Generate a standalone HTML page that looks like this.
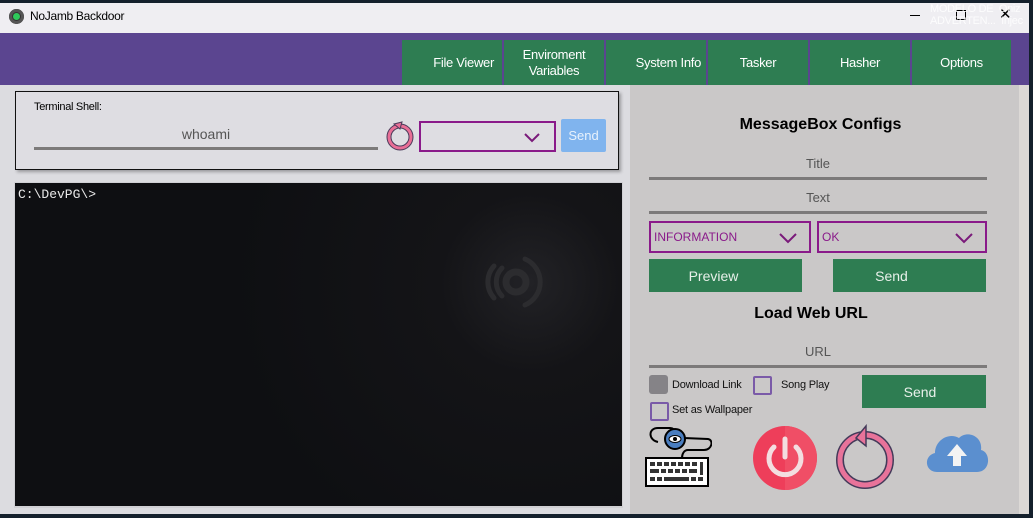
<!DOCTYPE html>
<html><head><meta charset="utf-8"><style>
*{margin:0;padding:0;box-sizing:border-box}
body{width:1033px;height:518px;background:#14202c;position:relative;overflow:hidden;font-family:"Liberation Sans",sans-serif}
.a{position:absolute}
.tab{position:absolute;top:40px;height:45px;width:100px;background:#2e7d52;color:#fff;font-size:13px;letter-spacing:-0.3px;display:flex;align-items:center;justify-content:center;text-align:center;line-height:16px}
.uline{position:absolute;height:3px;background:#7c7a7a}
.lbl{position:absolute;color:#555;font-size:13px;text-align:center}
.sel{position:absolute;border:2px solid #8a1a8a;color:#8a1a8a;font-size:12px;padding:7px 0 0 3px}
.gbtn{position:absolute;background:#2e7d52;color:#e8f0ea;font-size:14px;display:flex;align-items:center;justify-content:center}
.cb{position:absolute;width:19px;height:19px;border:2px solid #7a5aa8;border-radius:2px}
.cbl{position:absolute;font-size:11px;color:#111;letter-spacing:-0.2px}
</style></head><body>
<div class="a" style="left:0;top:3px;width:1029px;height:511px;background:#dcdce0"></div>
<div class="a" style="left:0;top:3px;width:1029px;height:30px;background:#efeef2"></div>
<div class="a" style="left:9px;top:9px;width:15px;height:15px;border-radius:50%;background:#333;box-shadow:inset 0 0 0 3px #555"></div>
<div class="a" style="left:13px;top:13px;width:7px;height:7px;border-radius:50%;background:#2ec95a"></div>
<div class="a" style="left:30px;top:9px;font-size:12px;color:#000;letter-spacing:-0.3px">NoJamb Backdoor</div>
<div class="a" style="left:910px;top:15px;width:10px;height:1px;background:#000"></div>
<div class="a" style="left:956px;top:10px;width:10px;height:10px;border:1px solid #000"></div>
<div class="a" style="left:999px;top:5px;font-size:15px;color:#000">✕</div>
<div class="a" style="left:930px;top:3px;font-size:11px;color:#fff;line-height:12px;opacity:.85;letter-spacing:-0.3px">MODELO DE &nbsp;Oniz<br>ADVERTEN... &nbsp;Injec</div>
<div class="a" style="left:0;top:33px;width:1029px;height:52px;background:#5b4590"></div>
<div class="tab" style="left:402px;justify-content:flex-end;padding-right:8px">File Viewer</div>
<div class="tab" style="left:504px">Enviroment<br>Variables</div>
<div class="tab" style="left:606px;justify-content:flex-end;padding-right:5px">System Info</div>
<div class="tab" style="left:708px">Tasker</div>
<div class="tab" style="left:810px">Hasher</div>
<div class="tab" style="left:912px;width:99px">Options</div>
<!-- left -->
<div class="a" style="left:0;top:85px;width:630px;height:429px;background:#dcdce0"></div>
<div class="a" style="left:15px;top:91px;width:604px;height:79px;background:#dedde2;border:1px solid #111;box-shadow:2px 2px 3px rgba(0,0,0,.3)"></div>
<div class="a" style="left:34px;top:101px;font-size:11px;color:#000;letter-spacing:-0.3px">Terminal Shell:</div>
<div class="a" style="left:34px;top:126px;width:344px;text-align:center;font-size:14px;color:#555">whoami</div>
<div class="uline" style="left:34px;top:147px;width:344px"></div>
<svg class="a" style="left:385px;top:120px" width="30" height="32" viewBox="0 0 30 32"><circle cx="15" cy="17" r="11" fill="none" stroke="#4a3a5a" stroke-width="5"/><circle cx="15" cy="17" r="11" fill="none" stroke="#e86e96" stroke-width="3"/><path d="M9 4 L17 2 L15 9 Z" fill="#e86e96" stroke="#4a3a5a"/></svg>
<div class="sel" style="left:419px;top:121px;width:137px;height:31px"></div>
<svg class="a" style="left:523px;top:131px" width="18" height="12"><path d="M2 3 L9 10 L16 3" fill="none" stroke="#7a1a7a" stroke-width="2"/></svg>
<div class="a" style="left:561px;top:119px;width:45px;height:33px;background:#80b4ee;border-radius:2px;color:#e8f2fc;font-size:13px;display:flex;align-items:center;justify-content:center">Send</div>
<div class="a" style="left:14px;top:182px;width:609px;height:326px;background:#d0d0d4"></div>
<div class="a" style="left:15px;top:183px;width:607px;height:323px;background:radial-gradient(circle at 515px 100px,#222226 0,#141417 90px,#0e0f12 300px)"></div>
<div class="a" style="left:18px;top:187px;font-family:'Liberation Mono',monospace;font-size:13px;color:#e8e8e8">C:\DevPG\&gt;</div>
<svg class="a" style="left:470px;top:240px" width="80" height="90" viewBox="0 0 80 90"><g fill="none" stroke="#2c2c2f" stroke-linecap="round"><circle cx="46" cy="42" r="10" stroke-width="7"/><path d="M32 28 A20 20 0 0 0 32 56" stroke-width="5"/><path d="M55 19 A25 25 0 0 1 55 65" stroke-width="5"/><path d="M24 26 A24 24 0 0 0 24 58" stroke-width="5"/></g></svg>
<!-- right -->
<div class="a" style="left:630px;top:85px;width:389px;height:429px;background:#cac8c8"></div>
<div class="a" style="left:1019px;top:85px;width:10px;height:429px;background:#dcd9d6"></div>
<div class="a" style="left:630px;top:116px;width:381px;text-align:center;font-size:16px;font-weight:bold;color:#000">MessageBox Configs</div>
<div class="lbl" style="left:649px;top:156px;width:338px">Title</div>
<div class="uline" style="left:649px;top:177px;width:338px"></div>
<div class="lbl" style="left:649px;top:190px;width:338px">Text</div>
<div class="uline" style="left:649px;top:211px;width:338px"></div>
<div class="sel" style="left:649px;top:221px;width:162px;height:32px">INFORMATION</div>
<svg class="a" style="left:778px;top:231px" width="20" height="14"><path d="M2 3 L10 11 L18 3" fill="none" stroke="#7a1a7a" stroke-width="2"/></svg>
<div class="sel" style="left:817px;top:221px;width:170px;height:32px">OK</div>
<svg class="a" style="left:954px;top:231px" width="20" height="14"><path d="M2 3 L10 11 L18 3" fill="none" stroke="#7a1a7a" stroke-width="2"/></svg>
<div class="gbtn" style="left:649px;top:259px;width:153px;height:33px;padding-right:24px">Preview</div>
<div class="gbtn" style="left:833px;top:259px;width:153px;height:33px;padding-right:36px">Send</div>
<div class="a" style="left:630px;top:305px;width:362px;text-align:center;font-size:16px;font-weight:bold;color:#000">Load Web URL</div>
<div class="lbl" style="left:649px;top:344px;width:338px">URL</div>
<div class="uline" style="left:649px;top:365px;width:338px"></div>
<div class="a" style="left:649px;top:375px;width:19px;height:19px;background:#858387;border-radius:3px"></div>
<div class="cbl" style="left:672px;top:379px">Download Link</div>
<div class="cb" style="left:753px;top:376px"></div>
<div class="cbl" style="left:781px;top:379px">Song Play</div>
<div class="gbtn" style="left:862px;top:375px;width:124px;height:33px;padding-right:8px">Send</div>
<div class="cb" style="left:650px;top:402px"></div>
<div class="cbl" style="left:672px;top:404px">Set as Wallpaper</div>
<svg class="a" style="left:644px;top:422px" width="68" height="66" viewBox="0 0 68 66"><path d="M14 20 C4 18 4 6 14 6 L26 6 C32 6 34 14 40 16 L64 17 C70 18 68 28 60 28 L44 28 C40 28 38 32 38 36" fill="none" stroke="#000" stroke-width="2"/><circle cx="31" cy="17" r="10" fill="#4a7ec0" stroke="#000" stroke-width="2"/><ellipse cx="31" cy="17" rx="6" ry="3.5" fill="#fff" stroke="#000"/><circle cx="31" cy="17" r="2" fill="#000"/><rect x="2" y="36" width="62" height="28" fill="#fff" stroke="#000" stroke-width="2"/><g fill="#333"><rect x="6" y="40" width="5" height="4"/><rect x="13" y="40" width="5" height="4"/><rect x="20" y="40" width="5" height="4"/><rect x="27" y="40" width="5" height="4"/><rect x="34" y="40" width="5" height="4"/><rect x="41" y="40" width="5" height="4"/><rect x="48" y="40" width="5" height="4"/><rect x="56" y="40" width="3" height="13"/><rect x="6" y="47" width="9" height="4"/><rect x="17" y="47" width="5" height="4"/><rect x="24" y="47" width="5" height="4"/><rect x="31" y="47" width="5" height="4"/><rect x="38" y="47" width="5" height="4"/><rect x="45" y="47" width="8" height="4"/><rect x="6" y="55" width="5" height="4"/><rect x="13" y="55" width="5" height="4"/><rect x="20" y="55" width="25" height="4"/><rect x="47" y="55" width="5" height="4"/><rect x="54" y="55" width="5" height="4"/></g></svg>
<svg class="a" style="left:752px;top:425px" width="66" height="66" viewBox="0 0 66 66"><circle cx="33" cy="33" r="32" fill="#ee3e5a"/><path d="M33 1 A32 32 0 0 1 33 65 Z" fill="#f04e66"/><path d="M22 22 A16 16 0 1 0 44 22" fill="none" stroke="#f3dde0" stroke-width="5" stroke-linecap="round"/><line x1="33" y1="14" x2="33" y2="32" stroke="#f3dde0" stroke-width="5" stroke-linecap="round"/></svg>
<svg class="a" style="left:836px;top:424px" width="60" height="66" viewBox="0 0 60 66"><circle cx="29" cy="36" r="25" fill="none" stroke="#443a5a" stroke-width="8"/><circle cx="29" cy="36" r="25" fill="none" stroke="#e8739a" stroke-width="5"/><path d="M20 14 L30 2 L30 22 Z" fill="#e8739a" stroke="#443a5a" stroke-width="1.5"/></svg>
<svg class="a" style="left:923px;top:428px" width="66" height="46" viewBox="0 0 66 46"><path d="M14 44 C2 44 0 28 12 25 C12 12 26 4 36 10 C44 2 60 8 58 22 C68 24 68 44 54 44 Z" fill="#5b8fcf"/><path d="M34 16 L44 28 L38 28 L38 38 L30 38 L30 28 L24 28 Z" fill="#f3f3f3"/></svg>
</body></html>
